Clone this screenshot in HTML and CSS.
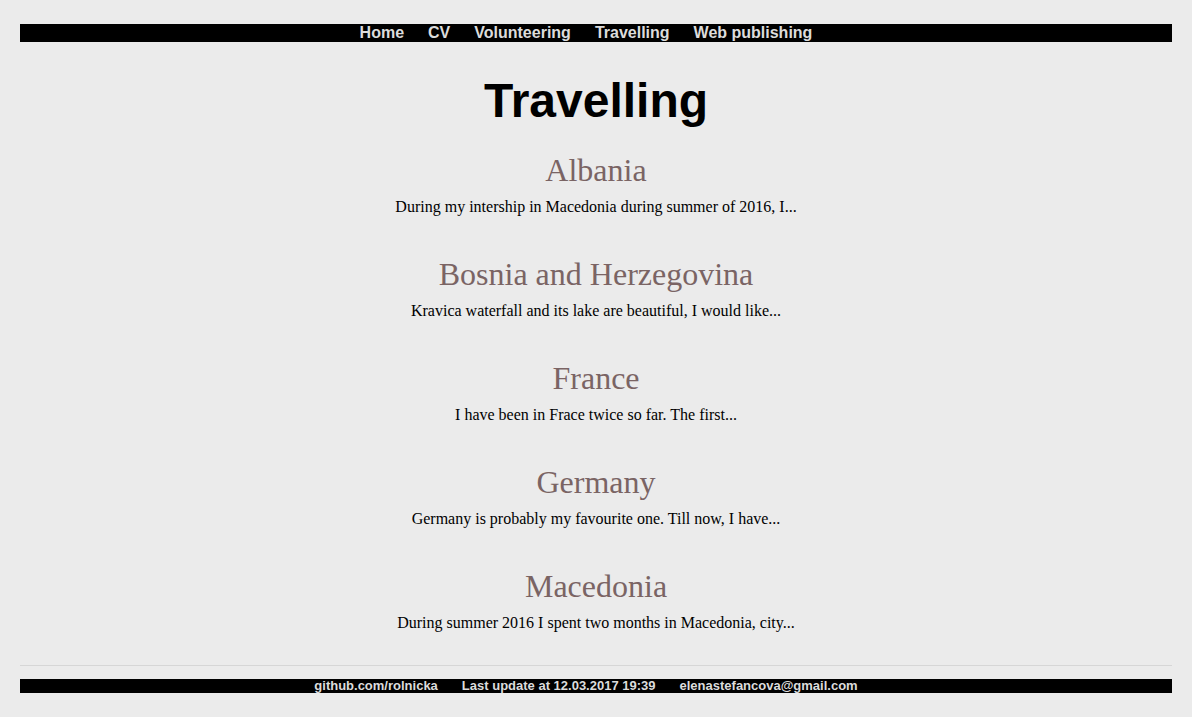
FILE: index.html
```html
<!DOCTYPE html>
<html lang="en">
<head>
<meta charset="utf-8">
<title>Travelling</title>
<link rel="stylesheet" href="styles.css">
</head>
<body>
<nav class="nav">
  <a href="#">Home</a>
  <a href="#">CV</a>
  <a href="#">Volunteering</a>
  <a href="#">Travelling</a>
  <a href="#">Web publishing</a>
</nav>
<main class="main">
  <h1 class="title">Travelling</h1>
  <div class="list">
    <article class="entry">
      <h2 class="entry-title">Albania</h2>
      <p class="entry-text">During my intership in Macedonia during summer of 2016, I...</p>
    </article>
    <article class="entry">
      <h2 class="entry-title">Bosnia and Herzegovina</h2>
      <p class="entry-text">Kravica waterfall and its lake are beautiful, I would like...</p>
    </article>
    <article class="entry">
      <h2 class="entry-title">France</h2>
      <p class="entry-text">I have been in Frace twice so far. The first...</p>
    </article>
    <article class="entry">
      <h2 class="entry-title">Germany</h2>
      <p class="entry-text">Germany is probably my favourite one. Till now, I have...</p>
    </article>
    <article class="entry">
      <h2 class="entry-title">Macedonia</h2>
      <p class="entry-text">During summer 2016 I spent two months in Macedonia, city...</p>
    </article>
  </div>
</main>
<footer class="footer">
  <hr class="rule">
  <div class="footer-bar">
    <span>github.com/rolnicka</span>
    <span>Last update at 12.03.2017 19:39</span>
    <span>elenastefancova@gmail.com</span>
  </div>
</footer>
</body>
</html>
```

FILE: styles.css
```css
html, body {
  margin: 0;
  padding: 0;
}
body {
  background: #ebebeb;
  padding: 24px 20px;
  font-family: "Liberation Serif", "Times New Roman", serif;
  color: #000;
}
.nav {
  background: #000;
  height: 18px;
  display: flex;
  justify-content: center;
  gap: 24px;
  padding-right: 20px;
  font-family: "Liberation Sans", Arial, sans-serif;
  font-weight: bold;
  font-size: 16px;
  line-height: 18px;
}
.nav a {
  color: #dcdcdc;
  text-decoration: none;
}
.main {
  text-align: center;
}
.title {
  margin: 31px 0 0;
  font-family: "Liberation Sans", Arial, sans-serif;
  font-weight: bold;
  font-size: 48px;
  line-height: 56px;
}
.list {
  display: flex;
  flex-direction: column;
  gap: 40px;
  margin-top: 23px;
}
.entry-title {
  margin: 0 0 9px;
  font-weight: normal;
  font-size: 32px;
  line-height: 37px;
  color: #7a6464;
}
.entry-text {
  margin: 0;
  font-size: 16px;
  line-height: 18px;
}
.footer {
  margin-top: 33px;
}
.rule {
  margin: 0;
  border: 0;
  border-top: 1px solid #d6d6d6;
}
.footer-bar {
  margin-top: 13px;
  background: #000;
  height: 14px;
  display: flex;
  justify-content: center;
  gap: 24px;
  padding-right: 20px;
  font-family: "Liberation Sans", Arial, sans-serif;
  font-weight: bold;
  font-size: 13px;
  line-height: 14px;
  color: #dcdcdc;
}
```
